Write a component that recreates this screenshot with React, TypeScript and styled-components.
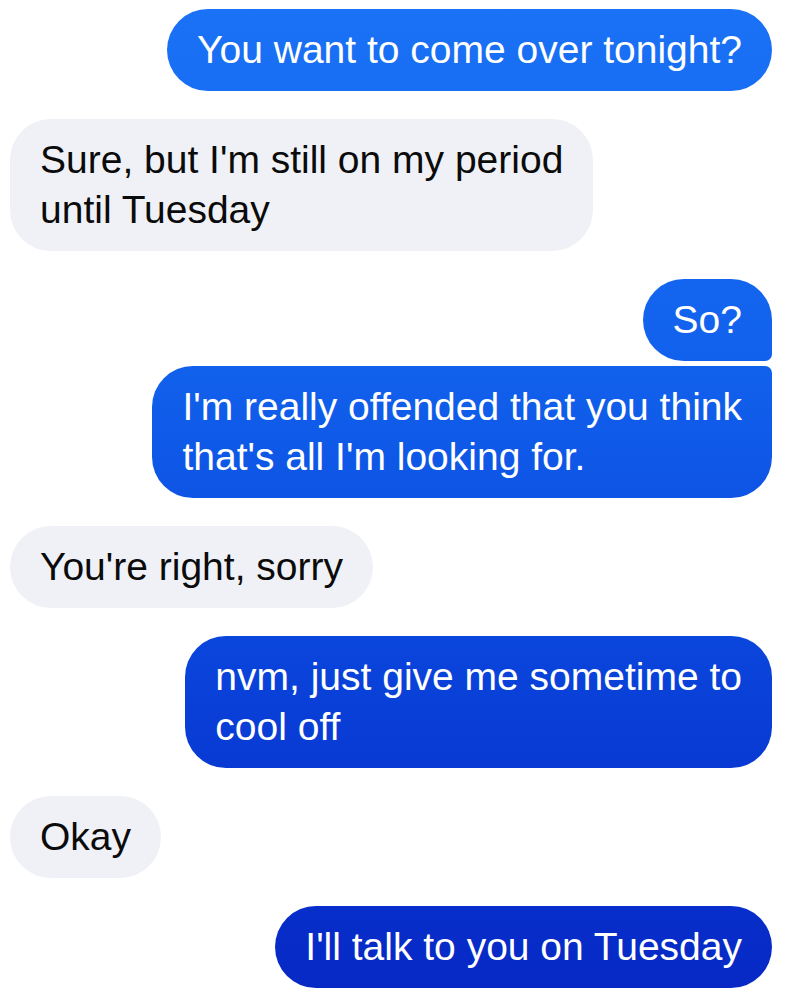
import styled, { createGlobalStyle, css } from "styled-components";

const GlobalStyle = createGlobalStyle`
  html, body {
    margin: 0;
    padding: 0;
    background: #ffffff;
    overflow: hidden;
  }
  body {
    font-family: "Liberation Sans", Arial, sans-serif;
  }
`;

type Side = "me" | "them";

type Msg = {
  side: Side;
  lines: string[];
  joined?: "top" | "bottom";
};

const messages: Msg[] = [
  { side: "me", lines: ["You want to come over tonight?"] },
  { side: "them", lines: ["Sure, but I'm still on my period", "until Tuesday"] },
  { side: "me", lines: ["So?"], joined: "bottom" },
  {
    side: "me",
    lines: ["I'm really offended that you think", "that's all I'm looking for."],
    joined: "top",
  },
  { side: "them", lines: ["You're right, sorry"] },
  { side: "me", lines: ["nvm, just give me sometime to", "cool off"] },
  { side: "them", lines: ["Okay"] },
  { side: "me", lines: ["I'll talk to you on Tuesday"] },
];

export default function App() {
  return (
    <>
      <GlobalStyle />
      <Thread>
        {messages.map((m, i) => (
          <Row key={i} $side={m.side} $tight={messages[i - 1]?.side === m.side}>
            <Bubble $side={m.side} $joined={m.joined}>
              {m.lines.map((l, j) => (
                <span key={j}>
                  {l}
                  {j < m.lines.length - 1 && <br />}
                </span>
              ))}
            </Bubble>
          </Row>
        ))}
      </Thread>
    </>
  );
}

const Thread = styled.div`
  display: flex;
  flex-direction: column;
  padding: 9px 18px 0 10px;
  width: 790px;
  height: 994px;
  box-sizing: border-box;
`;

const Row = styled.div<{ $side: Side; $tight: boolean }>`
  display: flex;
  justify-content: ${(p) => (p.$side === "me" ? "flex-end" : "flex-start")};
  margin-top: ${(p) => (p.$tight ? "5px" : "28px")};
  &:first-child {
    margin-top: 0;
  }
`;

const Bubble = styled.div<{ $side: Side; $joined?: "top" | "bottom" }>`
  padding: 16px 30px;
  font-size: 39px;
  line-height: 50px;
  border-radius: 41px;
  white-space: nowrap;
  ${(p) =>
    p.$side === "me"
      ? css`
          color: #ffffff;
          background: linear-gradient(
              180deg,
              #1a72f6 0%,
              #1160ec 38%,
              #0a44db 66%,
              #0732cd 86%,
              #0728c5 100%
            )
            fixed;
        `
      : css`
          color: #0b0b0b;
          background: #f0f1f6;
        `}
  ${(p) =>
    p.$joined === "bottom" &&
    css`
      border-bottom-right-radius: 7px;
    `}
  ${(p) =>
    p.$joined === "top" &&
    css`
      border-top-right-radius: 7px;
    `}
`;
